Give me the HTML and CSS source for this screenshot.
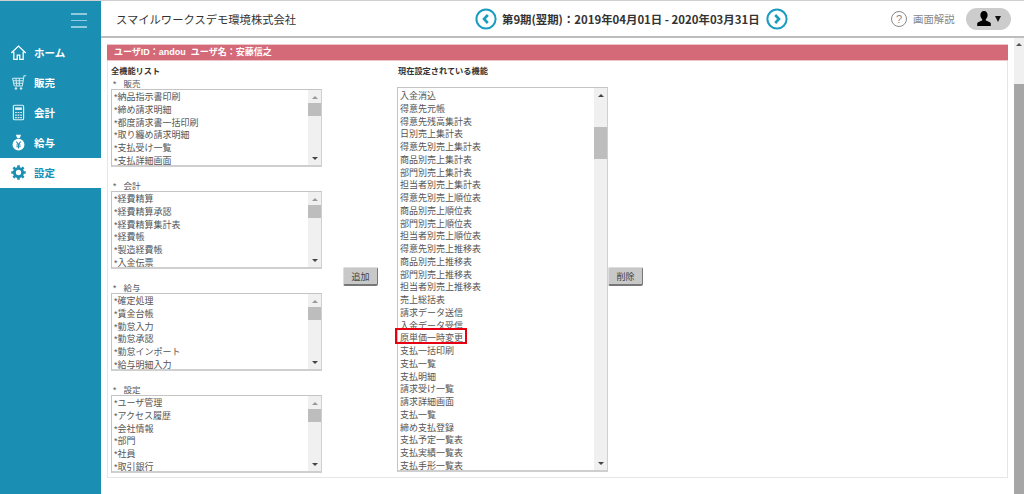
FILE: index.html
```html
<!DOCTYPE html>
<html lang="ja">
<head>
<meta charset="utf-8">
<title>設定</title>
<link rel="stylesheet" href="styles.css">
</head>
<body>
<aside class="sidebar">
  <div class="burger"><span></span><span></span><span></span></div>
  <nav class="nav">
    <a class="nav-item">
      <svg class="nav-icon" viewBox="0 0 20 20"><path d="M1.500 10.500 10 2.500l8.500 8M4.500 9v9h4v-5h3v5h4V9" fill="none" stroke="#fff" stroke-width="1.500"/></svg>
      ホーム</a>
    <a class="nav-item">
      <svg class="nav-icon" viewBox="0 0 20 20"><path d="M19 2h-2.500L14.500 14h-9M3 5h13M4 8h11.500M5 11h10M3 5l2 9M7 5l1 9M11 5l0 9" fill="none" stroke="#cfe8f0" stroke-width="1.200"/><circle cx="7" cy="17" r="1.500" fill="#cfe8f0"/><circle cx="13" cy="17" r="1.500" fill="#cfe8f0"/></svg>
      販売</a>
    <a class="nav-item">
      <svg class="nav-icon" viewBox="0 0 20 20"><rect x="4" y="1.500" width="12" height="17" rx="1.500" fill="none" stroke="#dff0f5" stroke-width="1.400"/><rect x="6" y="4" width="8" height="3" fill="#dff0f5"/><path d="M6 10h2M9 10h2M12 10h2M6 13h2M9 13h2M12 13h2M6 16h2M9 16h2M12 16h2" stroke="#dff0f5" stroke-width="1.400"/></svg>
      会計</a>
    <a class="nav-item">
      <svg class="nav-icon" viewBox="0 0 20 20"><path d="M7 1h6l-1.500 4h-3z" fill="#fff"/><circle cx="10" cy="12.500" r="7" fill="#fff"/><path d="M7.500 9 10 12.500 12.500 9M10 12.500V17M7.500 13h5M7.500 15h5" fill="none" stroke="#1a8fb3" stroke-width="1.200"/></svg>
      給与</a>
    <a class="nav-item active">
      <svg class="nav-icon" viewBox="0 0 20 20"><circle cx="10" cy="10" r="4.800" fill="none" stroke="#1a8fb3" stroke-width="3.400"/><path d="M10 1.500v3.500M10 15v3.500M1.500 10H5M15 10h3.500M4 4l2.500 2.500M13.500 13.500 16 16M16 4l-2.500 2.500M6.500 13.500 4 16" stroke="#1a8fb3" stroke-width="3"/></svg>
      設定</a>
  </nav>
</aside>
<div class="main">
  <header class="topbar">
    <div class="company">スマイルワークスデモ環境株式会社</div>
    <div class="period">
      <svg class="round-btn" viewBox="0 0 22 22"><circle cx="11" cy="11" r="9.600" fill="#fff" stroke="#1a9bc0" stroke-width="2"/><path d="M12.800 7 9 11l3.800 4" fill="none" stroke="#1a9bc0" stroke-width="2.600"/></svg>
      <span class="period-text">第9期(翌期)：2019年04月01日 - 2020年03月31日</span>
      <svg class="round-btn" viewBox="0 0 22 22"><circle cx="11" cy="11" r="9.600" fill="#fff" stroke="#1a9bc0" stroke-width="2"/><path d="M9.200 7l3.800 4-3.800 4" fill="none" stroke="#1a9bc0" stroke-width="2.600"/></svg>
    </div>
    <div class="help">
      <span class="help-mark">?</span>
      <span>画面解説</span>
    </div>
    <div class="user">
      <svg class="user-icon" viewBox="0 0 16 16"><path d="M8 0.500c2.300 0 3.600 1.700 3.600 4 0 2-1 3.500-1.800 4.200v1.400c1.800.7 4.200 1.400 5 2.700v2.700H1.200v-2.700c.8-1.300 3.200-2 5-2.700V8.700C5.400 8 4.400 6.500 4.400 4.500c0-2.300 1.300-4 3.600-4z" fill="#000"/></svg>
      <span class="caret"></span>
    </div>
  </header>
  <div class="page">
    <section class="panel">
      <div class="panel-head">ユーザID：andou&nbsp;&nbsp;ユーザ名：安藤信之</div>
      <div class="panel-body">
        <div class="col-left">
          <div class="col-title">全機能リスト</div>
          <div class="group-label">*&nbsp;&nbsp;&nbsp;販売</div>
          <div class="list-box short">
            <ul class="rows">
              <li>*納品指示書印刷</li><li>*締め請求明細</li><li>*都度請求書一括印刷</li><li>*取り纏め請求明細</li><li>*支払受け一覧</li><li>*支払詳細画面</li>
            </ul>
            <div class="bar"><span class="arrow-up"></span><span class="thumb"></span><span class="arrow-down"></span></div>
          </div>
          <div class="group-label">*&nbsp;&nbsp;&nbsp;会計</div>
          <div class="list-box short">
            <ul class="rows">
              <li>*経費精算</li><li>*経費精算承認</li><li>*経費精算集計表</li><li>*経費帳</li><li>*製造経費帳</li><li>*入金伝票</li>
            </ul>
            <div class="bar"><span class="arrow-up"></span><span class="thumb"></span><span class="arrow-down"></span></div>
          </div>
          <div class="group-label">*&nbsp;&nbsp;&nbsp;給与</div>
          <div class="list-box short">
            <ul class="rows">
              <li>*確定処理</li><li>*賃金台帳</li><li>*勤怠入力</li><li>*勤怠承認</li><li>*勤怠インポート</li><li>*給与明細入力</li>
            </ul>
            <div class="bar"><span class="arrow-up"></span><span class="thumb"></span><span class="arrow-down"></span></div>
          </div>
          <div class="group-label">*&nbsp;&nbsp;&nbsp;設定</div>
          <div class="list-box short">
            <ul class="rows">
              <li>*ユーザ管理</li><li>*アクセス履歴</li><li>*会社情報</li><li>*部門</li><li>*社員</li><li>*取引銀行</li>
            </ul>
            <div class="bar"><span class="arrow-up"></span><span class="thumb"></span><span class="arrow-down"></span></div>
          </div>
        </div>
        <div class="col-action"><button class="btn">追加</button></div>
        <div class="col-right">
          <div class="col-title">現在設定されている機能</div>
          <div class="list-box tall">
            <ul class="rows">
              <li>入金消込</li><li>得意先元帳</li><li>得意先残高集計表</li><li>日別売上集計表</li><li>得意先別売上集計表</li><li>商品別売上集計表</li><li>部門別売上集計表</li><li>担当者別売上集計表</li><li>得意先別売上順位表</li><li>商品別売上順位表</li><li>部門別売上順位表</li><li>担当者別売上順位表</li><li>得意先別売上推移表</li><li>商品別売上推移表</li><li>部門別売上推移表</li><li>担当者別売上推移表</li><li>売上総括表</li><li>請求データ送信</li><li>入金データ受信</li><li class="marked">原単価一時変更</li><li>支払一括印刷</li><li>支払一覧</li><li>支払明細</li><li>請求受け一覧</li><li>請求詳細画面</li><li>支払一覧</li><li>締め支払登録</li><li>支払予定一覧表</li><li>支払実績一覧表</li><li>支払手形一覧表</li>
            </ul>
            <div class="bar"><span class="arrow-up"></span><span class="thumb"></span><span class="arrow-down"></span></div>
          </div>
        </div>
        <div class="col-action-right"><button class="btn">削除</button></div>
      </div>
    </section>
    <div class="page-bar"><span class="page-arrow"></span><span class="page-thumb"></span></div>
  </div>
</div>
</body>
</html>
```
FILE: styles.css
```css
* { box-sizing: border-box; }
html, body { height: 100%; }
body {
  margin: 0;
  height: 494px;
  overflow: hidden;
  display: flex;
  background: #fff;
  border-top: 1px solid #d0d0d0;
  font-family: "Liberation Sans", "Noto Sans CJK JP", sans-serif;
  color: #444;
}
.sidebar { width: 101px; flex: none; background: #1a8fb3; }
.burger { height: 37px; padding: 12px 14px 0 71px; display: flex; flex-direction: column; gap: 5px; }
.burger span { display: block; height: 1.5px; background: #8fcbdd; }
.nav { display: flex; flex-direction: column; }
.nav-item {
  height: 30px;
  display: flex;
  align-items: center;
  gap: 7px;
  padding: 0 0 2px 10px;
  font-size: 10.5px;
  font-weight: 700;
  color: #fff;
}
.nav-item.active { background: #fff; color: #1a8fb3; }
.nav-icon { width: 17px; height: 17px; flex: none; }

.main { flex: 1; min-width: 0; display: flex; flex-direction: column; }
.topbar {
  height: 37px;
  flex: none;
  display: flex;
  align-items: center;
  padding-left: 15px;
  border-bottom: 2px solid #bdbdbd;
}
.company { width: 181px; font-size: 11.3px; color: #333; white-space: nowrap; }
.period { margin-left: 178px; display: flex; align-items: center; gap: 5px; }
.round-btn { width: 22px; height: 22px; flex: none; }
.period-text { font-family: "Noto Sans CJK JP", sans-serif; font-size: 11.4px; font-weight: 700; color: #333; white-space: nowrap; width: 259px; }
.help { margin-left: 103px; display: flex; align-items: center; gap: 6px; font-size: 10.4px; color: #888; white-space: nowrap; }
.help-mark {
  width: 16px; height: 16px;
  border: 1.5px solid #888;
  border-radius: 50%;
  display: flex; align-items: center; justify-content: center;
  font-size: 11px;
}
.user {
  margin-left: 11px;
  width: 45px; height: 22px;
  border-radius: 11px;
  background: #cccccc;
  display: flex; align-items: center; justify-content: center; gap: 3px;
}
.user-icon { width: 16px; height: 17px; }
.caret { width: 0; height: 0; border: 3.5px solid transparent; border-top: 6px solid #111; border-bottom: 0; }

.page { flex: 1; min-height: 0; display: flex; }
.panel {
  width: 901px;
  height: 434px;
  margin: 6px 6px 0;
  flex: none;
  border: 1px solid #e6e6e6;
  border-top: 0;
}
.panel-head {
  height: 17px;
  margin: 0 -1px;
  padding-left: 7px;
  background: #d46a78;
  border-top: 1px solid #ecc4ca;
  border-bottom: 1px solid #ecc4ca;
  color: #fff;
  font-size: 9px;
  font-weight: 700;
  line-height: 15px;
  white-space: nowrap;
}
.panel-body { display: flex; padding: 5px 0 0 3px; }
.col-left { width: 211px; flex: none; }
.col-title { height: 12px; font-size: 8.2px; line-height: 12px; font-weight: 700; color: #333; }
.group-label { height: 11px; font-size: 8.5px; line-height: 12px; color: #555; padding-left: 2px; }
.col-left .list-box + .group-label { margin-top: 13px; }
.col-action { width: 75px; flex: none; padding: 201px 0 0 21px; }
.col-right { width: 211px; flex: none; }
.col-right .col-title { padding-left: 1px; margin-bottom: 9px; }
.col-action-right { flex: none; padding-top: 201px; }
.btn {
  display: block;
  width: 35px; height: 19px;
  padding: 0;
  background: #c8c8c8;
  border: 1px solid #ddd;
  border-right: 1px solid #777;
  border-bottom: 2px solid #777;
  border-radius: 2px;
  font-family: inherit;
  font-size: 9px;
  color: #444;
}
.list-box {
  display: flex;
  border: 1px solid #c4c4c4;
  border-right-color: #cfcfcf;
  border-bottom: 2px solid #cfcfcf;
  background: #fff;
}
.list-box.short { height: 78px; overflow: hidden; }
.list-box.tall { height: 385px; }
.rows {
  list-style: none;
  margin: 0;
  padding: 1px 0 0 2px;
  flex: 1;
  min-width: 0;
  font-size: 9px;
  color: #555;
}
.rows li { height: 12.76px; line-height: 12.76px; white-space: nowrap; position: relative; }
.tall .rows { padding-top: 2px; }
.marked::after {
  content: "";
  box-sizing: border-box;
  position: absolute;
  left: -5px; top: -4.5px;
  width: 72px; height: 16px;
  border: 2px solid #e60012;
}
.bar { width: 13px; flex: none; background: #f0f0f0; position: relative; display: flex; flex-direction: column; align-items: center; }
.arrow-up { width: 0; height: 0; margin-top: 6px; border: 3px solid transparent; border-bottom: 3px solid #999; border-top: 0; }
.arrow-down { width: 0; height: 0; margin-top: auto; margin-bottom: 5px; border: 3px solid transparent; border-top: 3px solid #444; border-bottom: 0; }
.thumb { display: block; width: 100%; height: 13px; margin-top: 4px; background: #bdbdbd; }
.tall .thumb { height: 32px; margin-top: 30px; }
.tall .arrow-up { border-bottom-color: #444; }
.page-bar { width: 10px; margin-left: auto; flex: none; background: #f0f0f0; display: flex; flex-direction: column; align-items: center; }
.page-arrow { width: 0; height: 0; margin-top: 5px; border: 3px solid transparent; border-bottom: 3px solid #555; border-top: 0; }
.page-thumb { display: block; width: 100%; flex: 1; margin-top: 38px; background: #a6a6a6; }
```
